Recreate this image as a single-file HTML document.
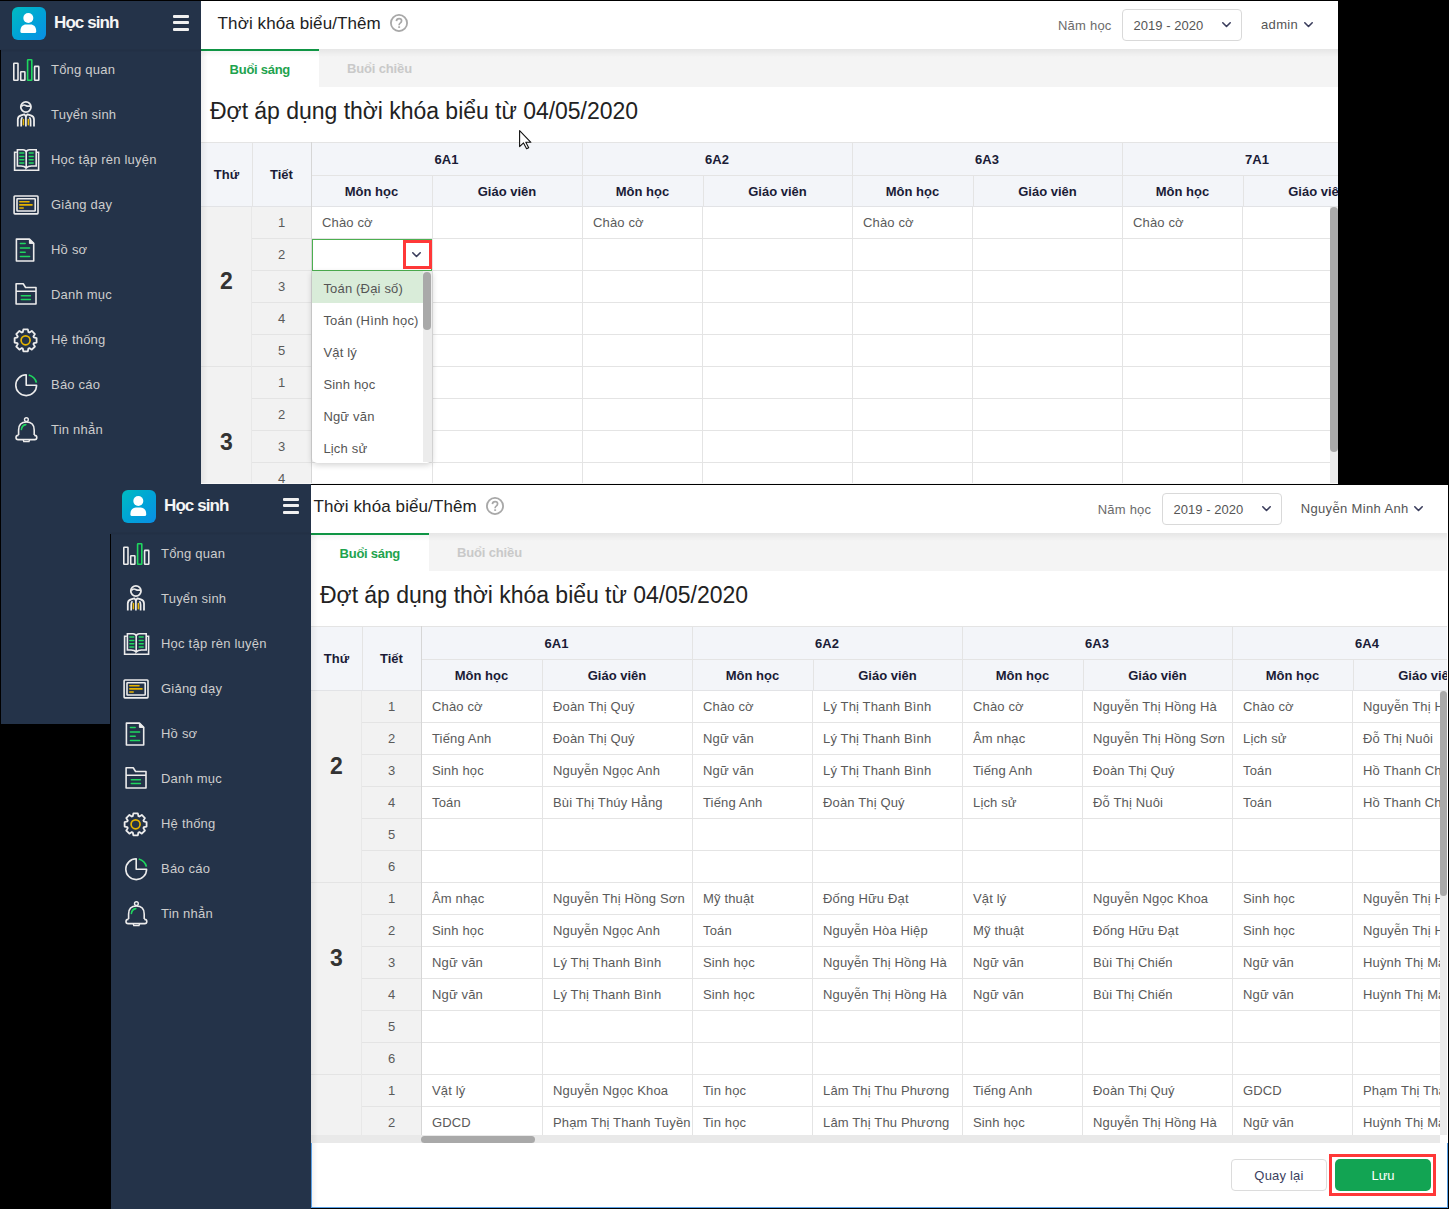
<!DOCTYPE html>
<html><head><meta charset="utf-8"><style>
html,body{margin:0;padding:0;background:#000;width:1449px;height:1209px;overflow:hidden;position:relative;font-family:"Liberation Sans", sans-serif}
div{position:absolute;box-sizing:border-box}
.t{white-space:nowrap;line-height:1}
</style></head><body>
<div style="left:0px;top:0px;width:1338px;height:1px;background:#000"></div><div style="left:0;top:0;width:1449px;height:1209px;clip-path:inset(1px 111px 726px 201px)"><div style="left:201px;top:1px;width:1137px;height:48px;background:#fff"></div><div class="t" style="left:217.6px;top:14.5px;font-size:17px;color:#222;font-weight:400;letter-spacing:0.1px;">Thời khóa biểu/Thêm</div><svg style="position:absolute;left:389.0px;top:12.899999999999999px" width="20" height="20"><circle cx="10" cy="10" r="8.1" fill="none" stroke="#a8a8a8" stroke-width="1.8"/><path d="M7.4 8.1 Q7.6 5.6 10.1 5.6 Q12.6 5.6 12.6 7.8 Q12.6 9.2 11.2 10.1 Q10.1 10.8 10.1 12.2" fill="none" stroke="#a8a8a8" stroke-width="1.7"/><rect x="9.2" y="13.3" width="1.9" height="1.6" fill="#a8a8a8"/></svg><div class="t" style="left:1058px;top:19px;font-size:13px;color:#6b6b6b;font-weight:400;letter-spacing:0.22px;">Năm học</div><div style="left:1122px;top:9px;width:120px;height:32px;background:#fff;border:1px solid #d9d9d9;border-radius:4px"></div><div class="t" style="left:1133.5px;top:19px;font-size:13px;color:#555;font-weight:400;letter-spacing:0.03px;">2019 - 2020</div><svg style="position:absolute;left:1222px;top:21.5px;overflow:visible" width="9" height="5"><path d="M0.8 0.8 L4.5 4.5 L8.2 0.8" fill="none" stroke="#3a3d5c" stroke-width="1.6" stroke-linecap="round" stroke-linejoin="round"/></svg><div class="t" style="left:1261px;top:18px;font-size:13px;color:#555;font-weight:400;letter-spacing:0.35px;">admin</div><svg style="position:absolute;left:1304.4px;top:21.5px;overflow:visible" width="9" height="5"><path d="M0.8 0.8 L4.5 4.5 L8.2 0.8" fill="none" stroke="#3a3d5c" stroke-width="1.6" stroke-linecap="round" stroke-linejoin="round"/></svg><div style="left:201px;top:49px;width:1137px;height:38px;background:#f4f4f4"></div><div style="left:201px;top:49px;width:118px;height:38px;background:#fff"></div><div style="left:201px;top:49px;width:118px;height:2px;background:#109d48"></div><div style="left:201px;top:49px;width:1137px;height:8px;background:linear-gradient(rgba(0,0,0,0.06),rgba(0,0,0,0))"></div><div class="t" style="left:229.6px;top:63px;font-size:13px;color:#1ea34e;font-weight:700;letter-spacing:-0.27px;">Buổi sáng</div><div class="t" style="left:347px;top:62px;font-size:13px;color:#c9c9c9;font-weight:700;letter-spacing:-0.15px;">Buổi chiều</div><div style="left:201px;top:87px;width:1137px;height:55px;background:#fff"></div><div class="t" style="left:210px;top:100.2px;font-size:23px;color:#222;font-weight:400;letter-spacing:-0.03px;">Đợt áp dụng thời khóa biểu từ 04/05/2020</div><div style="left:201px;top:142px;width:1137px;height:341px;background:#fff"></div><div style="left:201px;top:142px;width:1137px;height:65px;background:#f3f5f9"></div><div style="left:201px;top:207px;width:110px;height:276px;background:#f2f2f2"></div><div style="left:201px;top:142px;width:1137px;height:1px;background:#e4e4e4"></div><div style="left:311px;top:175px;width:1027px;height:1px;background:#e4e4e4"></div><div style="left:201px;top:206px;width:1137px;height:1px;background:#e2e3e6"></div><div style="left:251px;top:238px;width:1087px;height:1px;background:#e4e4e4"></div><div style="left:251px;top:270px;width:1087px;height:1px;background:#e4e4e4"></div><div style="left:251px;top:302px;width:1087px;height:1px;background:#e4e4e4"></div><div style="left:251px;top:334px;width:1087px;height:1px;background:#e4e4e4"></div><div style="left:201px;top:366px;width:1137px;height:1px;background:#e4e4e4"></div><div style="left:251px;top:398px;width:1087px;height:1px;background:#e4e4e4"></div><div style="left:251px;top:430px;width:1087px;height:1px;background:#e4e4e4"></div><div style="left:251px;top:462px;width:1087px;height:1px;background:#e4e4e4"></div><div style="left:252px;top:142px;width:1px;height:64px;background:#e4e4e4"></div><div style="left:251px;top:207px;width:1px;height:276px;background:#e8e8e8"></div><div style="left:311px;top:142px;width:1px;height:341px;background:#d6d6d6"></div><div style="left:582px;top:142px;width:1px;height:341px;background:#e4e4e4"></div><div style="left:852px;top:142px;width:1px;height:341px;background:#e4e4e4"></div><div style="left:1122px;top:142px;width:1px;height:341px;background:#e4e4e4"></div><div style="left:1392px;top:142px;width:1px;height:341px;background:#e4e4e4"></div><div style="left:432px;top:175px;width:1px;height:31px;background:#e4e4e4"></div><div style="left:703px;top:175px;width:1px;height:31px;background:#e4e4e4"></div><div style="left:973px;top:175px;width:1px;height:31px;background:#e4e4e4"></div><div style="left:1243px;top:175px;width:1px;height:31px;background:#e4e4e4"></div><div style="left:1513px;top:175px;width:1px;height:31px;background:#e4e4e4"></div><div style="left:432px;top:207px;width:1px;height:276px;background:#e4e4e4"></div><div style="left:702px;top:207px;width:1px;height:276px;background:#e4e4e4"></div><div style="left:972px;top:207px;width:1px;height:276px;background:#e4e4e4"></div><div style="left:1242px;top:207px;width:1px;height:276px;background:#e4e4e4"></div><div style="left:1512px;top:207px;width:1px;height:276px;background:#e4e4e4"></div><div class="t" style="left:196.5px;top:168px;width:60px;text-align:center;font-size:13px;color:#1a1b36;font-weight:700;letter-spacing:0px;">Thứ</div><div class="t" style="left:251.5px;top:168px;width:60px;text-align:center;font-size:13px;color:#1a1b36;font-weight:700;letter-spacing:0px;">Tiết</div><div class="t" style="left:396.5px;top:153px;width:100px;text-align:center;font-size:13px;color:#1a1b36;font-weight:700;letter-spacing:0px;">6A1</div><div class="t" style="left:321.5px;top:185px;width:100px;text-align:center;font-size:13px;color:#1a1b36;font-weight:700;letter-spacing:0px;">Môn học</div><div class="t" style="left:457.0px;top:185px;width:100px;text-align:center;font-size:13px;color:#1a1b36;font-weight:700;letter-spacing:0px;">Giáo viên</div><div class="t" style="left:667.0px;top:153px;width:100px;text-align:center;font-size:13px;color:#1a1b36;font-weight:700;letter-spacing:0px;">6A2</div><div class="t" style="left:592.5px;top:185px;width:100px;text-align:center;font-size:13px;color:#1a1b36;font-weight:700;letter-spacing:0px;">Môn học</div><div class="t" style="left:727.5px;top:185px;width:100px;text-align:center;font-size:13px;color:#1a1b36;font-weight:700;letter-spacing:0px;">Giáo viên</div><div class="t" style="left:937.0px;top:153px;width:100px;text-align:center;font-size:13px;color:#1a1b36;font-weight:700;letter-spacing:0px;">6A3</div><div class="t" style="left:862.5px;top:185px;width:100px;text-align:center;font-size:13px;color:#1a1b36;font-weight:700;letter-spacing:0px;">Môn học</div><div class="t" style="left:997.5px;top:185px;width:100px;text-align:center;font-size:13px;color:#1a1b36;font-weight:700;letter-spacing:0px;">Giáo viên</div><div class="t" style="left:1207.0px;top:153px;width:100px;text-align:center;font-size:13px;color:#1a1b36;font-weight:700;letter-spacing:0px;">7A1</div><div class="t" style="left:1132.5px;top:185px;width:100px;text-align:center;font-size:13px;color:#1a1b36;font-weight:700;letter-spacing:0px;">Môn học</div><div class="t" style="left:1267.5px;top:185px;width:100px;text-align:center;font-size:13px;color:#1a1b36;font-weight:700;letter-spacing:0px;">Giáo viên</div><div class="t" style="left:1477.0px;top:153px;width:100px;text-align:center;font-size:13px;color:#1a1b36;font-weight:700;letter-spacing:0px;">7A2</div><div class="t" style="left:1402.5px;top:185px;width:100px;text-align:center;font-size:13px;color:#1a1b36;font-weight:700;letter-spacing:0px;">Môn học</div><div class="t" style="left:1537.5px;top:185px;width:100px;text-align:center;font-size:13px;color:#1a1b36;font-weight:700;letter-spacing:0px;">Giáo viên</div><div class="t" style="left:206.5px;top:270.3px;width:40px;text-align:center;font-size:23px;color:#333;font-weight:700;letter-spacing:0px;">2</div><div class="t" style="left:206.5px;top:430.8px;width:40px;text-align:center;font-size:23px;color:#333;font-weight:700;letter-spacing:0px;">3</div><div class="t" style="left:266.5px;top:216px;width:30px;text-align:center;font-size:13px;color:#5a5a5a;font-weight:400;letter-spacing:0px;">1</div><div class="t" style="left:322px;top:216px;font-size:13px;color:#5a5a5a;font-weight:400;letter-spacing:0.15px;">Chào cờ</div><div class="t" style="left:593px;top:216px;font-size:13px;color:#5a5a5a;font-weight:400;letter-spacing:0.15px;">Chào cờ</div><div class="t" style="left:863px;top:216px;font-size:13px;color:#5a5a5a;font-weight:400;letter-spacing:0.15px;">Chào cờ</div><div class="t" style="left:1133px;top:216px;font-size:13px;color:#5a5a5a;font-weight:400;letter-spacing:0.15px;">Chào cờ</div><div class="t" style="left:266.5px;top:248px;width:30px;text-align:center;font-size:13px;color:#5a5a5a;font-weight:400;letter-spacing:0px;">2</div><div class="t" style="left:266.5px;top:280px;width:30px;text-align:center;font-size:13px;color:#5a5a5a;font-weight:400;letter-spacing:0px;">3</div><div class="t" style="left:266.5px;top:312px;width:30px;text-align:center;font-size:13px;color:#5a5a5a;font-weight:400;letter-spacing:0px;">4</div><div class="t" style="left:266.5px;top:344px;width:30px;text-align:center;font-size:13px;color:#5a5a5a;font-weight:400;letter-spacing:0px;">5</div><div class="t" style="left:266.5px;top:376px;width:30px;text-align:center;font-size:13px;color:#5a5a5a;font-weight:400;letter-spacing:0px;">1</div><div class="t" style="left:266.5px;top:408px;width:30px;text-align:center;font-size:13px;color:#5a5a5a;font-weight:400;letter-spacing:0px;">2</div><div class="t" style="left:266.5px;top:440px;width:30px;text-align:center;font-size:13px;color:#5a5a5a;font-weight:400;letter-spacing:0px;">3</div><div class="t" style="left:266.5px;top:472px;width:30px;text-align:center;font-size:13px;color:#5a5a5a;font-weight:400;letter-spacing:0px;">4</div><div style="left:1330px;top:207px;width:8px;height:276px;background:#ebebeb"></div><div style="left:1330px;top:207px;width:8px;height:245px;background:#a9a9a9;border-radius:4px"></div><div style="left:312px;top:239px;width:120px;height:32px;background:#fff;border:1px solid #4caf50"></div><svg style="position:absolute;left:412px;top:251.8px;overflow:visible" width="9" height="5"><path d="M0.8 0.8 L4.5 4.5 L8.2 0.8" fill="none" stroke="#3a3d5c" stroke-width="1.6" stroke-linecap="round" stroke-linejoin="round"/></svg><div style="left:403px;top:240px;width:29px;height:29px;border:3px solid #ff3838"></div><div style="left:312px;top:271px;width:120px;height:192px;background:#fff;border-radius:0 0 5px 5px;box-shadow:0 2px 6px rgba(0,0,0,0.18)"></div><div style="left:312px;top:271px;width:111px;height:32px;background:#d9ecd9"></div><div style="left:423px;top:271px;width:9px;height:191px;background:#ececec"></div><div style="left:423px;top:272px;width:8px;height:58px;background:#a9a9a9;border-radius:4px"></div><div class="t" style="left:323.4px;top:282px;font-size:13px;color:#555;font-weight:400;letter-spacing:0.18px;">Toán (Đại số)</div><div class="t" style="left:323.4px;top:314px;font-size:13px;color:#555;font-weight:400;letter-spacing:0.18px;">Toán (Hình học)</div><div class="t" style="left:323.4px;top:346px;font-size:13px;color:#555;font-weight:400;letter-spacing:0.18px;">Vật lý</div><div class="t" style="left:323.4px;top:378px;font-size:13px;color:#555;font-weight:400;letter-spacing:0.18px;">Sinh học</div><div class="t" style="left:323.4px;top:410px;font-size:13px;color:#555;font-weight:400;letter-spacing:0.18px;">Ngữ văn</div><div class="t" style="left:323.4px;top:442px;font-size:13px;color:#555;font-weight:400;letter-spacing:0.18px;">Lịch sử</div><svg style="position:absolute;left:0;top:0;overflow:visible" width="1" height="1"><path d="M519.6 130.6 V146.6 L523.5 142.9 L526.6 148.7 L528.7 147.7 L525.8 142.3 H530.9 Z" fill="#fff" stroke="#111" stroke-width="1.1" stroke-linejoin="round"/></svg><div style="left:201px;top:49px;width:7px;height:434px;background:linear-gradient(to right, rgba(0,0,0,0.06), rgba(0,0,0,0))"></div></div><div style="left:201px;top:483px;width:1137px;height:1px;background:#f8f8f8"></div><div style="left:0px;top:1px;width:201px;height:723px;background:#243349"></div><div style="left:0px;top:49px;width:201px;height:3px;background:linear-gradient(rgba(0,0,0,0.03),rgba(0,0,0,0.06),rgba(0,0,0,0.02))"></div><div style="left:0px;top:50px;width:1px;height:674px;background:#000"></div><div style="left:12px;top:7px;width:34px;height:33px;border-radius:6px;background:linear-gradient(135deg,#00bcc0 0%,#00a4d6 50%,#0a8ee6 100%)"></div><svg style="position:absolute;left:12px;top:7px" width="34" height="33"><circle cx="16.3" cy="11" r="5" fill="#fff"/><path d="M8.4 24 C8.4 19.5 11 17.4 14 17.4 H18.6 C21.6 17.4 24.2 19.5 24.2 24 V24.6 Q24.2 26.1 22.7 26.1 H9.9 Q8.4 26.1 8.4 24.6 Z" fill="#fff"/></svg><div class="t" style="left:54px;top:14.2px;font-size:17px;color:#f5f5f5;font-weight:700;letter-spacing:-0.9px;">Học sinh</div><div style="left:173px;top:15px;width:16px;height:3px;background:#f0f0f0;border-radius:1px"></div><div style="left:173px;top:21.4px;width:16px;height:3px;background:#f0f0f0;border-radius:1px"></div><div style="left:173px;top:27.8px;width:16px;height:3px;background:#f0f0f0;border-radius:1px"></div><div class="t" style="left:51px;top:63px;font-size:13px;color:#cdcdcd;font-weight:400;letter-spacing:0.22px;">Tổng quan</div><div class="t" style="left:51px;top:108px;font-size:13px;color:#cdcdcd;font-weight:400;letter-spacing:0.22px;">Tuyển sinh</div><div class="t" style="left:51px;top:153px;font-size:13px;color:#cdcdcd;font-weight:400;letter-spacing:0.22px;">Học tập rèn luyện</div><div class="t" style="left:51px;top:198px;font-size:13px;color:#cdcdcd;font-weight:400;letter-spacing:0.22px;">Giảng dạy</div><div class="t" style="left:51px;top:243px;font-size:13px;color:#cdcdcd;font-weight:400;letter-spacing:0.22px;">Hồ sơ</div><div class="t" style="left:51px;top:288px;font-size:13px;color:#cdcdcd;font-weight:400;letter-spacing:0.22px;">Danh mục</div><div class="t" style="left:51px;top:333px;font-size:13px;color:#cdcdcd;font-weight:400;letter-spacing:0.22px;">Hệ thống</div><div class="t" style="left:51px;top:378px;font-size:13px;color:#cdcdcd;font-weight:400;letter-spacing:0.22px;">Báo cáo</div><div class="t" style="left:51px;top:423px;font-size:13px;color:#cdcdcd;font-weight:400;letter-spacing:0.22px;">Tin nhẳn</div><svg style="position:absolute;left:0px;top:0px;overflow:visible" width="50" height="460" viewBox="0 0 50 460"><rect x="13.8" y="63.3" width="4.2" height="17" fill="none" stroke="#ececec" stroke-width="1.6" rx="0.5"/><rect x="20.7" y="71.8" width="4.2" height="8.5" fill="none" stroke="#ececec" stroke-width="1.6" rx="0.5"/><rect x="27.6" y="59.8" width="4.2" height="20.5" fill="none" stroke="#1fd65f" stroke-width="1.6" rx="0.5"/><rect x="34.6" y="66.4" width="4.2" height="13.9" fill="none" stroke="#ececec" stroke-width="1.6" rx="0.5"/><circle cx="25.9" cy="107" r="5.1" fill="none" stroke="#ececec" stroke-width="1.8"/><path d="M21.4 106.6 Q23.2 104.2 25.6 105.4 Q28 106.7 30.6 105.9" fill="none" stroke="#ececec" stroke-width="1.7"/><path d="M17.8 126.6 V119.6 Q17.8 116.4 21 115.4 L24.4 114.3 L25.9 116.4 L27.4 114.3 L30.8 115.4 Q34 116.4 34 119.6 V126.6" fill="none" stroke="#ececec" stroke-width="1.8" stroke-linejoin="round"/><path d="M21.2 126.6 V120.8 Q21.2 118.6 22.4 117.2 M25.9 116.6 V126.6 M30.6 126.6 V120.8 Q30.6 118.6 29.4 117.2" fill="none" stroke="#ececec" stroke-width="1.7"/><path d="M23.4 119.4 V124.8 M28.4 119.4 V124.8" fill="none" stroke="#e6b400" stroke-width="1.5" stroke-linecap="round"/><path d="M16.8 152.3 H14.6 V170.2 H38.6 V152.3 H36.6" fill="none" stroke="#ececec" stroke-width="1.6"/><path d="M26.2 168 Q24.5 166 21 166 H17.4 V149.8 H23 Q25.6 149.8 26.2 152 Q26.8 149.8 29.4 149.8 H36.2 V166 H31.4 Q27.9 166 26.2 168 V152" fill="none" stroke="#ececec" stroke-width="1.6"/><path d="M19.8 153.1 H23.8 M29.2 153.1 H33.2" stroke="#1fd65f" stroke-width="1.5" stroke-linecap="round"/><path d="M19.8 156.4 H23.8 M29.2 156.4 H33.2" stroke="#1fd65f" stroke-width="1.5" stroke-linecap="round"/><path d="M19.8 159.8 H23.8 M29.2 159.8 H33.2" stroke="#1fd65f" stroke-width="1.5" stroke-linecap="round"/><path d="M19.8 163.1 H23.8 M29.2 163.1 H33.2" stroke="#1fd65f" stroke-width="1.5" stroke-linecap="round"/><rect x="14.1" y="196" width="23.9" height="17.9" fill="none" stroke="#ececec" stroke-width="1.6" rx="0.8"/><rect x="17" y="198.8" width="18.2" height="12.2" fill="none" stroke="#ececec" stroke-width="1.6" rx="0.5"/><path d="M19.8 201.8 H29 M19.8 204.9 H32 M19.8 208 H23.2" stroke="#e6b400" stroke-width="1.6" stroke-linecap="round"/><path d="M16.4 239.1 H29.4 L33.7 243.4 V261 H16.4 Z" fill="none" stroke="#ececec" stroke-width="1.6" stroke-linejoin="round"/><path d="M29.4 239.1 V243.4 H33.7 Z" fill="#ececec" stroke="#ececec" stroke-width="1"/><path d="M20.4 243.6 H25.2 M20.4 247.9 H29.6 M20.4 252.2 H25.2 M20.4 256.5 H29.6" stroke="#1fd65f" stroke-width="1.5" stroke-linecap="round"/><path d="M16.1 304 V283.8 H23.2 L25.6 287.5 H36 V304 Z M16.1 291.2 H36" fill="none" stroke="#ececec" stroke-width="1.6" stroke-linejoin="round"/><path d="M21.3 295.8 H30.4 M21.3 299.5 H30.4" stroke="#1fd65f" stroke-width="1.5" stroke-linecap="round"/><path d="M28.42 348.53 L27.83 351.28 L23.37 351.28 L22.78 348.53 L21.77 348.11 L19.41 349.64 L16.26 346.49 L17.79 344.13 L17.37 343.12 L14.62 342.53 L14.62 338.07 L17.37 337.48 L17.79 336.47 L16.26 334.11 L19.41 330.96 L21.77 332.49 L22.78 332.07 L23.37 329.32 L27.83 329.32 L28.42 332.07 L29.43 332.49 L31.79 330.96 L34.94 334.11 L33.41 336.47 L33.83 337.48 L36.58 338.07 L36.58 342.53 L33.83 343.12 L33.41 344.13 L34.94 346.49 L31.79 349.64 L29.43 348.11 Z" fill="none" stroke="#ececec" stroke-width="1.8" stroke-linejoin="round"/><circle cx="25.6" cy="340.3" r="4.5" fill="none" stroke="#e6b400" stroke-width="1.7"/><path d="M26.2 374.8 A10.4 10.4 0 1 0 36.6 385.2 H26.2 Z" fill="none" stroke="#ececec" stroke-width="1.6" stroke-linejoin="round"/><path d="M28.74 375.01 A10.5 10.5 0 0 1 36.39 382.66" fill="none" stroke="#1fd65f" stroke-width="1.7"/><circle cx="26.4" cy="419.6" r="1.9" fill="none" stroke="#ececec" stroke-width="1.4"/><path d="M18.6 435 V430 Q18.6 422 26.4 422 Q34.2 422 34.2 430 V435" fill="none" stroke="#ececec" stroke-width="1.6"/><path d="M18.6 435.4 H18.1 A2.1 2.1 0 0 0 18.1 439.6 H34.7 A2.1 2.1 0 0 0 34.7 435.4 H34.2" fill="none" stroke="#ececec" stroke-width="1.6"/><path d="M23.2 439.5 L23.8 441.6 H29 L29.6 439.5" fill="none" stroke="#ececec" stroke-width="1.4"/><path d="M21.4 429.5 Q22 425 25.8 424.6" fill="none" stroke="#1fd65f" stroke-width="1.6" stroke-linecap="round"/></svg><div style="left:311px;top:484px;width:1137px;height:1px;background:#000"></div><div style="left:0;top:0;width:1449px;height:1209px;clip-path:inset(485px 1px 2px 311px)"><div style="left:311px;top:485px;width:1137px;height:723px;background:#fff"></div><div style="left:311px;top:485px;width:1137px;height:48px;background:#fff"></div><div class="t" style="left:313.5px;top:497.5px;font-size:17px;color:#222;font-weight:400;letter-spacing:0.1px;">Thời khóa biểu/Thêm</div><svg style="position:absolute;left:484.9px;top:495.9px" width="20" height="20"><circle cx="10" cy="10" r="8.1" fill="none" stroke="#a8a8a8" stroke-width="1.8"/><path d="M7.4 8.1 Q7.6 5.6 10.1 5.6 Q12.6 5.6 12.6 7.8 Q12.6 9.2 11.2 10.1 Q10.1 10.8 10.1 12.2" fill="none" stroke="#a8a8a8" stroke-width="1.7"/><rect x="9.2" y="13.3" width="1.9" height="1.6" fill="#a8a8a8"/></svg><div class="t" style="left:1097.7px;top:503px;font-size:13px;color:#6b6b6b;font-weight:400;letter-spacing:0.22px;">Năm học</div><div style="left:1162px;top:493px;width:120px;height:32px;background:#fff;border:1px solid #d9d9d9;border-radius:4px"></div><div class="t" style="left:1173.5px;top:503px;font-size:13px;color:#555;font-weight:400;letter-spacing:0.03px;">2019 - 2020</div><svg style="position:absolute;left:1262px;top:505.5px;overflow:visible" width="9" height="5"><path d="M0.8 0.8 L4.5 4.5 L8.2 0.8" fill="none" stroke="#3a3d5c" stroke-width="1.6" stroke-linecap="round" stroke-linejoin="round"/></svg><div class="t" style="left:1300.7px;top:502px;font-size:13px;color:#555;font-weight:400;letter-spacing:0.35px;">Nguyễn Minh Anh</div><svg style="position:absolute;left:1414.0px;top:505.5px;overflow:visible" width="9" height="5"><path d="M0.8 0.8 L4.5 4.5 L8.2 0.8" fill="none" stroke="#3a3d5c" stroke-width="1.6" stroke-linecap="round" stroke-linejoin="round"/></svg><div style="left:311px;top:533px;width:1137px;height:38px;background:#f4f4f4"></div><div style="left:311px;top:533px;width:118px;height:38px;background:#fff"></div><div style="left:311px;top:533px;width:118px;height:2px;background:#109d48"></div><div style="left:311px;top:533px;width:1137px;height:8px;background:linear-gradient(rgba(0,0,0,0.06),rgba(0,0,0,0))"></div><div class="t" style="left:339.6px;top:547px;font-size:13px;color:#1ea34e;font-weight:700;letter-spacing:-0.27px;">Buổi sáng</div><div class="t" style="left:457px;top:546px;font-size:13px;color:#c9c9c9;font-weight:700;letter-spacing:-0.15px;">Buổi chiều</div><div style="left:311px;top:571px;width:1137px;height:55px;background:#fff"></div><div class="t" style="left:320px;top:584.2px;font-size:23px;color:#222;font-weight:400;letter-spacing:-0.03px;">Đợt áp dụng thời khóa biểu từ 04/05/2020</div><div style="left:311px;top:626px;width:1137px;height:509px;background:#fff"></div><div style="left:311px;top:626px;width:1137px;height:65px;background:#f3f5f9"></div><div style="left:311px;top:691px;width:110px;height:444px;background:#f2f2f2"></div><div style="left:311px;top:626px;width:1137px;height:1px;background:#e4e4e4"></div><div style="left:421px;top:659px;width:1027px;height:1px;background:#e4e4e4"></div><div style="left:311px;top:690px;width:1137px;height:1px;background:#e2e3e6"></div><div style="left:361px;top:722px;width:1087px;height:1px;background:#e4e4e4"></div><div style="left:361px;top:754px;width:1087px;height:1px;background:#e4e4e4"></div><div style="left:361px;top:786px;width:1087px;height:1px;background:#e4e4e4"></div><div style="left:361px;top:818px;width:1087px;height:1px;background:#e4e4e4"></div><div style="left:361px;top:850px;width:1087px;height:1px;background:#e4e4e4"></div><div style="left:311px;top:882px;width:1137px;height:1px;background:#e4e4e4"></div><div style="left:361px;top:914px;width:1087px;height:1px;background:#e4e4e4"></div><div style="left:361px;top:946px;width:1087px;height:1px;background:#e4e4e4"></div><div style="left:361px;top:978px;width:1087px;height:1px;background:#e4e4e4"></div><div style="left:361px;top:1010px;width:1087px;height:1px;background:#e4e4e4"></div><div style="left:361px;top:1042px;width:1087px;height:1px;background:#e4e4e4"></div><div style="left:311px;top:1074px;width:1137px;height:1px;background:#e4e4e4"></div><div style="left:361px;top:1106px;width:1087px;height:1px;background:#e4e4e4"></div><div style="left:362px;top:626px;width:1px;height:64px;background:#e4e4e4"></div><div style="left:361px;top:691px;width:1px;height:444px;background:#e8e8e8"></div><div style="left:421px;top:626px;width:1px;height:509px;background:#d6d6d6"></div><div style="left:692px;top:626px;width:1px;height:509px;background:#e4e4e4"></div><div style="left:962px;top:626px;width:1px;height:509px;background:#e4e4e4"></div><div style="left:1232px;top:626px;width:1px;height:509px;background:#e4e4e4"></div><div style="left:1502px;top:626px;width:1px;height:509px;background:#e4e4e4"></div><div style="left:542px;top:659px;width:1px;height:31px;background:#e4e4e4"></div><div style="left:813px;top:659px;width:1px;height:31px;background:#e4e4e4"></div><div style="left:1083px;top:659px;width:1px;height:31px;background:#e4e4e4"></div><div style="left:1353px;top:659px;width:1px;height:31px;background:#e4e4e4"></div><div style="left:1623px;top:659px;width:1px;height:31px;background:#e4e4e4"></div><div style="left:542px;top:691px;width:1px;height:444px;background:#e4e4e4"></div><div style="left:812px;top:691px;width:1px;height:444px;background:#e4e4e4"></div><div style="left:1082px;top:691px;width:1px;height:444px;background:#e4e4e4"></div><div style="left:1352px;top:691px;width:1px;height:444px;background:#e4e4e4"></div><div style="left:1622px;top:691px;width:1px;height:444px;background:#e4e4e4"></div><div class="t" style="left:306.5px;top:652px;width:60px;text-align:center;font-size:13px;color:#1a1b36;font-weight:700;letter-spacing:0px;">Thứ</div><div class="t" style="left:361.5px;top:652px;width:60px;text-align:center;font-size:13px;color:#1a1b36;font-weight:700;letter-spacing:0px;">Tiết</div><div class="t" style="left:506.5px;top:637px;width:100px;text-align:center;font-size:13px;color:#1a1b36;font-weight:700;letter-spacing:0px;">6A1</div><div class="t" style="left:431.5px;top:669px;width:100px;text-align:center;font-size:13px;color:#1a1b36;font-weight:700;letter-spacing:0px;">Môn học</div><div class="t" style="left:567.0px;top:669px;width:100px;text-align:center;font-size:13px;color:#1a1b36;font-weight:700;letter-spacing:0px;">Giáo viên</div><div class="t" style="left:777.0px;top:637px;width:100px;text-align:center;font-size:13px;color:#1a1b36;font-weight:700;letter-spacing:0px;">6A2</div><div class="t" style="left:702.5px;top:669px;width:100px;text-align:center;font-size:13px;color:#1a1b36;font-weight:700;letter-spacing:0px;">Môn học</div><div class="t" style="left:837.5px;top:669px;width:100px;text-align:center;font-size:13px;color:#1a1b36;font-weight:700;letter-spacing:0px;">Giáo viên</div><div class="t" style="left:1047.0px;top:637px;width:100px;text-align:center;font-size:13px;color:#1a1b36;font-weight:700;letter-spacing:0px;">6A3</div><div class="t" style="left:972.5px;top:669px;width:100px;text-align:center;font-size:13px;color:#1a1b36;font-weight:700;letter-spacing:0px;">Môn học</div><div class="t" style="left:1107.5px;top:669px;width:100px;text-align:center;font-size:13px;color:#1a1b36;font-weight:700;letter-spacing:0px;">Giáo viên</div><div class="t" style="left:1317.0px;top:637px;width:100px;text-align:center;font-size:13px;color:#1a1b36;font-weight:700;letter-spacing:0px;">6A4</div><div class="t" style="left:1242.5px;top:669px;width:100px;text-align:center;font-size:13px;color:#1a1b36;font-weight:700;letter-spacing:0px;">Môn học</div><div class="t" style="left:1377.5px;top:669px;width:100px;text-align:center;font-size:13px;color:#1a1b36;font-weight:700;letter-spacing:0px;">Giáo viên</div><div class="t" style="left:1587.0px;top:637px;width:100px;text-align:center;font-size:13px;color:#1a1b36;font-weight:700;letter-spacing:0px;">6A5</div><div class="t" style="left:1512.5px;top:669px;width:100px;text-align:center;font-size:13px;color:#1a1b36;font-weight:700;letter-spacing:0px;">Môn học</div><div class="t" style="left:1647.5px;top:669px;width:100px;text-align:center;font-size:13px;color:#1a1b36;font-weight:700;letter-spacing:0px;">Giáo viên</div><div class="t" style="left:316.5px;top:755.3px;width:40px;text-align:center;font-size:23px;color:#333;font-weight:700;letter-spacing:0px;">2</div><div class="t" style="left:316.5px;top:947.3px;width:40px;text-align:center;font-size:23px;color:#333;font-weight:700;letter-spacing:0px;">3</div><div class="t" style="left:376.5px;top:700px;width:30px;text-align:center;font-size:13px;color:#5a5a5a;font-weight:400;letter-spacing:0px;">1</div><div class="t" style="left:432px;top:700px;font-size:13px;color:#5a5a5a;font-weight:400;letter-spacing:0.15px;">Chào cờ</div><div class="t" style="left:553px;top:700px;font-size:13px;color:#5a5a5a;font-weight:400;letter-spacing:0.15px;">Đoàn Thị Quý</div><div class="t" style="left:703px;top:700px;font-size:13px;color:#5a5a5a;font-weight:400;letter-spacing:0.15px;">Chào cờ</div><div class="t" style="left:823px;top:700px;font-size:13px;color:#5a5a5a;font-weight:400;letter-spacing:0.15px;">Lý Thị Thanh Bình</div><div class="t" style="left:973px;top:700px;font-size:13px;color:#5a5a5a;font-weight:400;letter-spacing:0.15px;">Chào cờ</div><div class="t" style="left:1093px;top:700px;font-size:13px;color:#5a5a5a;font-weight:400;letter-spacing:0.15px;">Nguyễn Thị Hồng Hà</div><div class="t" style="left:1243px;top:700px;font-size:13px;color:#5a5a5a;font-weight:400;letter-spacing:0.15px;">Chào cờ</div><div class="t" style="left:1363px;top:700px;font-size:13px;color:#5a5a5a;font-weight:400;letter-spacing:0.15px;">Nguyễn Thị Hồng Hà</div><div class="t" style="left:376.5px;top:732px;width:30px;text-align:center;font-size:13px;color:#5a5a5a;font-weight:400;letter-spacing:0px;">2</div><div class="t" style="left:432px;top:732px;font-size:13px;color:#5a5a5a;font-weight:400;letter-spacing:0.15px;">Tiếng Anh</div><div class="t" style="left:553px;top:732px;font-size:13px;color:#5a5a5a;font-weight:400;letter-spacing:0.15px;">Đoàn Thị Quý</div><div class="t" style="left:703px;top:732px;font-size:13px;color:#5a5a5a;font-weight:400;letter-spacing:0.15px;">Ngữ văn</div><div class="t" style="left:823px;top:732px;font-size:13px;color:#5a5a5a;font-weight:400;letter-spacing:0.15px;">Lý Thị Thanh Bình</div><div class="t" style="left:973px;top:732px;font-size:13px;color:#5a5a5a;font-weight:400;letter-spacing:0.15px;">Âm nhạc</div><div class="t" style="left:1093px;top:732px;font-size:13px;color:#5a5a5a;font-weight:400;letter-spacing:0.15px;">Nguyễn Thị Hồng Sơn</div><div class="t" style="left:1243px;top:732px;font-size:13px;color:#5a5a5a;font-weight:400;letter-spacing:0.15px;">Lịch sử</div><div class="t" style="left:1363px;top:732px;font-size:13px;color:#5a5a5a;font-weight:400;letter-spacing:0.15px;">Đỗ Thị Nuôi</div><div class="t" style="left:376.5px;top:764px;width:30px;text-align:center;font-size:13px;color:#5a5a5a;font-weight:400;letter-spacing:0px;">3</div><div class="t" style="left:432px;top:764px;font-size:13px;color:#5a5a5a;font-weight:400;letter-spacing:0.15px;">Sinh học</div><div class="t" style="left:553px;top:764px;font-size:13px;color:#5a5a5a;font-weight:400;letter-spacing:0.15px;">Nguyễn Ngọc Anh</div><div class="t" style="left:703px;top:764px;font-size:13px;color:#5a5a5a;font-weight:400;letter-spacing:0.15px;">Ngữ văn</div><div class="t" style="left:823px;top:764px;font-size:13px;color:#5a5a5a;font-weight:400;letter-spacing:0.15px;">Lý Thị Thanh Bình</div><div class="t" style="left:973px;top:764px;font-size:13px;color:#5a5a5a;font-weight:400;letter-spacing:0.15px;">Tiếng Anh</div><div class="t" style="left:1093px;top:764px;font-size:13px;color:#5a5a5a;font-weight:400;letter-spacing:0.15px;">Đoàn Thị Quý</div><div class="t" style="left:1243px;top:764px;font-size:13px;color:#5a5a5a;font-weight:400;letter-spacing:0.15px;">Toán</div><div class="t" style="left:1363px;top:764px;font-size:13px;color:#5a5a5a;font-weight:400;letter-spacing:0.15px;">Hồ Thanh Chung</div><div class="t" style="left:376.5px;top:796px;width:30px;text-align:center;font-size:13px;color:#5a5a5a;font-weight:400;letter-spacing:0px;">4</div><div class="t" style="left:432px;top:796px;font-size:13px;color:#5a5a5a;font-weight:400;letter-spacing:0.15px;">Toán</div><div class="t" style="left:553px;top:796px;font-size:13px;color:#5a5a5a;font-weight:400;letter-spacing:0.15px;">Bùi Thị Thúy Hẳng</div><div class="t" style="left:703px;top:796px;font-size:13px;color:#5a5a5a;font-weight:400;letter-spacing:0.15px;">Tiếng Anh</div><div class="t" style="left:823px;top:796px;font-size:13px;color:#5a5a5a;font-weight:400;letter-spacing:0.15px;">Đoàn Thị Quý</div><div class="t" style="left:973px;top:796px;font-size:13px;color:#5a5a5a;font-weight:400;letter-spacing:0.15px;">Lịch sử</div><div class="t" style="left:1093px;top:796px;font-size:13px;color:#5a5a5a;font-weight:400;letter-spacing:0.15px;">Đỗ Thị Nuôi</div><div class="t" style="left:1243px;top:796px;font-size:13px;color:#5a5a5a;font-weight:400;letter-spacing:0.15px;">Toán</div><div class="t" style="left:1363px;top:796px;font-size:13px;color:#5a5a5a;font-weight:400;letter-spacing:0.15px;">Hồ Thanh Chung</div><div class="t" style="left:376.5px;top:828px;width:30px;text-align:center;font-size:13px;color:#5a5a5a;font-weight:400;letter-spacing:0px;">5</div><div class="t" style="left:376.5px;top:860px;width:30px;text-align:center;font-size:13px;color:#5a5a5a;font-weight:400;letter-spacing:0px;">6</div><div class="t" style="left:376.5px;top:892px;width:30px;text-align:center;font-size:13px;color:#5a5a5a;font-weight:400;letter-spacing:0px;">1</div><div class="t" style="left:432px;top:892px;font-size:13px;color:#5a5a5a;font-weight:400;letter-spacing:0.15px;">Âm nhạc</div><div class="t" style="left:553px;top:892px;font-size:13px;color:#5a5a5a;font-weight:400;letter-spacing:0.15px;">Nguyễn Thị Hồng Sơn</div><div class="t" style="left:703px;top:892px;font-size:13px;color:#5a5a5a;font-weight:400;letter-spacing:0.15px;">Mỹ thuật</div><div class="t" style="left:823px;top:892px;font-size:13px;color:#5a5a5a;font-weight:400;letter-spacing:0.15px;">Đống Hữu Đạt</div><div class="t" style="left:973px;top:892px;font-size:13px;color:#5a5a5a;font-weight:400;letter-spacing:0.15px;">Vật lý</div><div class="t" style="left:1093px;top:892px;font-size:13px;color:#5a5a5a;font-weight:400;letter-spacing:0.15px;">Nguyễn Ngọc Khoa</div><div class="t" style="left:1243px;top:892px;font-size:13px;color:#5a5a5a;font-weight:400;letter-spacing:0.15px;">Sinh học</div><div class="t" style="left:1363px;top:892px;font-size:13px;color:#5a5a5a;font-weight:400;letter-spacing:0.15px;">Nguyễn Thị Hồng Hà</div><div class="t" style="left:376.5px;top:924px;width:30px;text-align:center;font-size:13px;color:#5a5a5a;font-weight:400;letter-spacing:0px;">2</div><div class="t" style="left:432px;top:924px;font-size:13px;color:#5a5a5a;font-weight:400;letter-spacing:0.15px;">Sinh học</div><div class="t" style="left:553px;top:924px;font-size:13px;color:#5a5a5a;font-weight:400;letter-spacing:0.15px;">Nguyễn Ngọc Anh</div><div class="t" style="left:703px;top:924px;font-size:13px;color:#5a5a5a;font-weight:400;letter-spacing:0.15px;">Toán</div><div class="t" style="left:823px;top:924px;font-size:13px;color:#5a5a5a;font-weight:400;letter-spacing:0.15px;">Nguyễn Hòa Hiệp</div><div class="t" style="left:973px;top:924px;font-size:13px;color:#5a5a5a;font-weight:400;letter-spacing:0.15px;">Mỹ thuật</div><div class="t" style="left:1093px;top:924px;font-size:13px;color:#5a5a5a;font-weight:400;letter-spacing:0.15px;">Đống Hữu Đạt</div><div class="t" style="left:1243px;top:924px;font-size:13px;color:#5a5a5a;font-weight:400;letter-spacing:0.15px;">Sinh học</div><div class="t" style="left:1363px;top:924px;font-size:13px;color:#5a5a5a;font-weight:400;letter-spacing:0.15px;">Nguyễn Thị Hồng Hà</div><div class="t" style="left:376.5px;top:956px;width:30px;text-align:center;font-size:13px;color:#5a5a5a;font-weight:400;letter-spacing:0px;">3</div><div class="t" style="left:432px;top:956px;font-size:13px;color:#5a5a5a;font-weight:400;letter-spacing:0.15px;">Ngữ văn</div><div class="t" style="left:553px;top:956px;font-size:13px;color:#5a5a5a;font-weight:400;letter-spacing:0.15px;">Lý Thị Thanh Bình</div><div class="t" style="left:703px;top:956px;font-size:13px;color:#5a5a5a;font-weight:400;letter-spacing:0.15px;">Sinh học</div><div class="t" style="left:823px;top:956px;font-size:13px;color:#5a5a5a;font-weight:400;letter-spacing:0.15px;">Nguyễn Thị Hồng Hà</div><div class="t" style="left:973px;top:956px;font-size:13px;color:#5a5a5a;font-weight:400;letter-spacing:0.15px;">Ngữ văn</div><div class="t" style="left:1093px;top:956px;font-size:13px;color:#5a5a5a;font-weight:400;letter-spacing:0.15px;">Bùi Thị Chiến</div><div class="t" style="left:1243px;top:956px;font-size:13px;color:#5a5a5a;font-weight:400;letter-spacing:0.15px;">Ngữ văn</div><div class="t" style="left:1363px;top:956px;font-size:13px;color:#5a5a5a;font-weight:400;letter-spacing:0.15px;">Huỳnh Thị Mai</div><div class="t" style="left:376.5px;top:988px;width:30px;text-align:center;font-size:13px;color:#5a5a5a;font-weight:400;letter-spacing:0px;">4</div><div class="t" style="left:432px;top:988px;font-size:13px;color:#5a5a5a;font-weight:400;letter-spacing:0.15px;">Ngữ văn</div><div class="t" style="left:553px;top:988px;font-size:13px;color:#5a5a5a;font-weight:400;letter-spacing:0.15px;">Lý Thị Thanh Bình</div><div class="t" style="left:703px;top:988px;font-size:13px;color:#5a5a5a;font-weight:400;letter-spacing:0.15px;">Sinh học</div><div class="t" style="left:823px;top:988px;font-size:13px;color:#5a5a5a;font-weight:400;letter-spacing:0.15px;">Nguyễn Thị Hồng Hà</div><div class="t" style="left:973px;top:988px;font-size:13px;color:#5a5a5a;font-weight:400;letter-spacing:0.15px;">Ngữ văn</div><div class="t" style="left:1093px;top:988px;font-size:13px;color:#5a5a5a;font-weight:400;letter-spacing:0.15px;">Bùi Thị Chiến</div><div class="t" style="left:1243px;top:988px;font-size:13px;color:#5a5a5a;font-weight:400;letter-spacing:0.15px;">Ngữ văn</div><div class="t" style="left:1363px;top:988px;font-size:13px;color:#5a5a5a;font-weight:400;letter-spacing:0.15px;">Huỳnh Thị Mai</div><div class="t" style="left:376.5px;top:1020px;width:30px;text-align:center;font-size:13px;color:#5a5a5a;font-weight:400;letter-spacing:0px;">5</div><div class="t" style="left:376.5px;top:1052px;width:30px;text-align:center;font-size:13px;color:#5a5a5a;font-weight:400;letter-spacing:0px;">6</div><div class="t" style="left:376.5px;top:1084px;width:30px;text-align:center;font-size:13px;color:#5a5a5a;font-weight:400;letter-spacing:0px;">1</div><div class="t" style="left:432px;top:1084px;font-size:13px;color:#5a5a5a;font-weight:400;letter-spacing:0.15px;">Vật lý</div><div class="t" style="left:553px;top:1084px;font-size:13px;color:#5a5a5a;font-weight:400;letter-spacing:0.15px;">Nguyễn Ngọc Khoa</div><div class="t" style="left:703px;top:1084px;font-size:13px;color:#5a5a5a;font-weight:400;letter-spacing:0.15px;">Tin học</div><div class="t" style="left:823px;top:1084px;font-size:13px;color:#5a5a5a;font-weight:400;letter-spacing:0.15px;">Lâm Thị Thu Phương</div><div class="t" style="left:973px;top:1084px;font-size:13px;color:#5a5a5a;font-weight:400;letter-spacing:0.15px;">Tiếng Anh</div><div class="t" style="left:1093px;top:1084px;font-size:13px;color:#5a5a5a;font-weight:400;letter-spacing:0.15px;">Đoàn Thị Quý</div><div class="t" style="left:1243px;top:1084px;font-size:13px;color:#5a5a5a;font-weight:400;letter-spacing:0.15px;">GDCD</div><div class="t" style="left:1363px;top:1084px;font-size:13px;color:#5a5a5a;font-weight:400;letter-spacing:0.15px;">Phạm Thị Thanh Tuyền</div><div class="t" style="left:376.5px;top:1116px;width:30px;text-align:center;font-size:13px;color:#5a5a5a;font-weight:400;letter-spacing:0px;">2</div><div class="t" style="left:432px;top:1116px;font-size:13px;color:#5a5a5a;font-weight:400;letter-spacing:0.15px;">GDCD</div><div class="t" style="left:553px;top:1116px;font-size:13px;color:#5a5a5a;font-weight:400;letter-spacing:0.15px;">Phạm Thị Thanh Tuyền</div><div class="t" style="left:703px;top:1116px;font-size:13px;color:#5a5a5a;font-weight:400;letter-spacing:0.15px;">Tin học</div><div class="t" style="left:823px;top:1116px;font-size:13px;color:#5a5a5a;font-weight:400;letter-spacing:0.15px;">Lâm Thị Thu Phương</div><div class="t" style="left:973px;top:1116px;font-size:13px;color:#5a5a5a;font-weight:400;letter-spacing:0.15px;">Sinh học</div><div class="t" style="left:1093px;top:1116px;font-size:13px;color:#5a5a5a;font-weight:400;letter-spacing:0.15px;">Nguyễn Thị Hồng Hà</div><div class="t" style="left:1243px;top:1116px;font-size:13px;color:#5a5a5a;font-weight:400;letter-spacing:0.15px;">Ngữ văn</div><div class="t" style="left:1363px;top:1116px;font-size:13px;color:#5a5a5a;font-weight:400;letter-spacing:0.15px;">Huỳnh Thị Mai</div><div style="left:1440px;top:691px;width:7px;height:444px;background:#ebebeb"></div><div style="left:1440px;top:691px;width:7px;height:205px;background:#a9a9a9;border-radius:4px"></div><div style="left:1447px;top:485px;width:1px;height:658px;background:#fff"></div><div style="left:311px;top:1135px;width:1129px;height:8px;background:#e9e9e9"></div><div style="left:421px;top:1135.5px;width:114px;height:7px;background:#a9a9a9;border-radius:4px"></div><div style="left:311px;top:1143px;width:1136px;height:64px;background:#fff"></div><div style="left:1231px;top:1159px;width:96px;height:32px;background:#fff;border:1px solid #dcdcdc;border-radius:4px"></div><div class="t" style="left:1234.0px;top:1169px;width:90px;text-align:center;font-size:13px;color:#3c3f5e;font-weight:400;letter-spacing:0.2px;">Quay lại</div><div style="left:1335px;top:1159px;width:96px;height:32px;background:#12a453;border-radius:5px"></div><div class="t" style="left:1338.0px;top:1169px;width:90px;text-align:center;font-size:13px;color:#fff;font-weight:400;letter-spacing:0px;">Lưu</div><div style="left:1329px;top:1154px;width:107px;height:42px;border:3px solid #ff3838"></div><div style="left:311px;top:533px;width:7px;height:674px;background:linear-gradient(to right, rgba(0,0,0,0.06), rgba(0,0,0,0))"></div></div><div style="left:311px;top:1143px;width:1px;height:65px;background:#5aa0e6"></div><div style="left:311px;top:1207px;width:1137px;height:1px;background:#5aa0e6"></div><div style="left:1447px;top:1143px;width:1px;height:65px;background:#5aa0e6"></div><div style="left:1448px;top:484px;width:1px;height:725px;background:#000"></div><div style="left:311px;top:1208px;width:1138px;height:1px;background:#000"></div><div style="left:110px;top:484px;width:201px;height:725px;background:#243349"></div><div style="left:110px;top:532px;width:201px;height:3px;background:linear-gradient(rgba(0,0,0,0.03),rgba(0,0,0,0.06),rgba(0,0,0,0.02))"></div><div style="left:110px;top:534px;width:1px;height:675px;background:#000"></div><div style="left:122px;top:490px;width:34px;height:33px;border-radius:6px;background:linear-gradient(135deg,#00bcc0 0%,#00a4d6 50%,#0a8ee6 100%)"></div><svg style="position:absolute;left:122px;top:490px" width="34" height="33"><circle cx="16.3" cy="11" r="5" fill="#fff"/><path d="M8.4 24 C8.4 19.5 11 17.4 14 17.4 H18.6 C21.6 17.4 24.2 19.5 24.2 24 V24.6 Q24.2 26.1 22.7 26.1 H9.9 Q8.4 26.1 8.4 24.6 Z" fill="#fff"/></svg><div class="t" style="left:164px;top:497.2px;font-size:17px;color:#f5f5f5;font-weight:700;letter-spacing:-0.9px;">Học sinh</div><div style="left:283px;top:498px;width:16px;height:3px;background:#f0f0f0;border-radius:1px"></div><div style="left:283px;top:504.4px;width:16px;height:3px;background:#f0f0f0;border-radius:1px"></div><div style="left:283px;top:510.8px;width:16px;height:3px;background:#f0f0f0;border-radius:1px"></div><div class="t" style="left:161px;top:547px;font-size:13px;color:#cdcdcd;font-weight:400;letter-spacing:0.22px;">Tổng quan</div><div class="t" style="left:161px;top:592px;font-size:13px;color:#cdcdcd;font-weight:400;letter-spacing:0.22px;">Tuyển sinh</div><div class="t" style="left:161px;top:637px;font-size:13px;color:#cdcdcd;font-weight:400;letter-spacing:0.22px;">Học tập rèn luyện</div><div class="t" style="left:161px;top:682px;font-size:13px;color:#cdcdcd;font-weight:400;letter-spacing:0.22px;">Giảng dạy</div><div class="t" style="left:161px;top:727px;font-size:13px;color:#cdcdcd;font-weight:400;letter-spacing:0.22px;">Hồ sơ</div><div class="t" style="left:161px;top:772px;font-size:13px;color:#cdcdcd;font-weight:400;letter-spacing:0.22px;">Danh mục</div><div class="t" style="left:161px;top:817px;font-size:13px;color:#cdcdcd;font-weight:400;letter-spacing:0.22px;">Hệ thống</div><div class="t" style="left:161px;top:862px;font-size:13px;color:#cdcdcd;font-weight:400;letter-spacing:0.22px;">Báo cáo</div><div class="t" style="left:161px;top:907px;font-size:13px;color:#cdcdcd;font-weight:400;letter-spacing:0.22px;">Tin nhẳn</div><svg style="position:absolute;left:110px;top:484px;overflow:visible" width="50" height="460" viewBox="0 0 50 460"><rect x="13.8" y="63.3" width="4.2" height="17" fill="none" stroke="#ececec" stroke-width="1.6" rx="0.5"/><rect x="20.7" y="71.8" width="4.2" height="8.5" fill="none" stroke="#ececec" stroke-width="1.6" rx="0.5"/><rect x="27.6" y="59.8" width="4.2" height="20.5" fill="none" stroke="#1fd65f" stroke-width="1.6" rx="0.5"/><rect x="34.6" y="66.4" width="4.2" height="13.9" fill="none" stroke="#ececec" stroke-width="1.6" rx="0.5"/><circle cx="25.9" cy="107" r="5.1" fill="none" stroke="#ececec" stroke-width="1.8"/><path d="M21.4 106.6 Q23.2 104.2 25.6 105.4 Q28 106.7 30.6 105.9" fill="none" stroke="#ececec" stroke-width="1.7"/><path d="M17.8 126.6 V119.6 Q17.8 116.4 21 115.4 L24.4 114.3 L25.9 116.4 L27.4 114.3 L30.8 115.4 Q34 116.4 34 119.6 V126.6" fill="none" stroke="#ececec" stroke-width="1.8" stroke-linejoin="round"/><path d="M21.2 126.6 V120.8 Q21.2 118.6 22.4 117.2 M25.9 116.6 V126.6 M30.6 126.6 V120.8 Q30.6 118.6 29.4 117.2" fill="none" stroke="#ececec" stroke-width="1.7"/><path d="M23.4 119.4 V124.8 M28.4 119.4 V124.8" fill="none" stroke="#e6b400" stroke-width="1.5" stroke-linecap="round"/><path d="M16.8 152.3 H14.6 V170.2 H38.6 V152.3 H36.6" fill="none" stroke="#ececec" stroke-width="1.6"/><path d="M26.2 168 Q24.5 166 21 166 H17.4 V149.8 H23 Q25.6 149.8 26.2 152 Q26.8 149.8 29.4 149.8 H36.2 V166 H31.4 Q27.9 166 26.2 168 V152" fill="none" stroke="#ececec" stroke-width="1.6"/><path d="M19.8 153.1 H23.8 M29.2 153.1 H33.2" stroke="#1fd65f" stroke-width="1.5" stroke-linecap="round"/><path d="M19.8 156.4 H23.8 M29.2 156.4 H33.2" stroke="#1fd65f" stroke-width="1.5" stroke-linecap="round"/><path d="M19.8 159.8 H23.8 M29.2 159.8 H33.2" stroke="#1fd65f" stroke-width="1.5" stroke-linecap="round"/><path d="M19.8 163.1 H23.8 M29.2 163.1 H33.2" stroke="#1fd65f" stroke-width="1.5" stroke-linecap="round"/><rect x="14.1" y="196" width="23.9" height="17.9" fill="none" stroke="#ececec" stroke-width="1.6" rx="0.8"/><rect x="17" y="198.8" width="18.2" height="12.2" fill="none" stroke="#ececec" stroke-width="1.6" rx="0.5"/><path d="M19.8 201.8 H29 M19.8 204.9 H32 M19.8 208 H23.2" stroke="#e6b400" stroke-width="1.6" stroke-linecap="round"/><path d="M16.4 239.1 H29.4 L33.7 243.4 V261 H16.4 Z" fill="none" stroke="#ececec" stroke-width="1.6" stroke-linejoin="round"/><path d="M29.4 239.1 V243.4 H33.7 Z" fill="#ececec" stroke="#ececec" stroke-width="1"/><path d="M20.4 243.6 H25.2 M20.4 247.9 H29.6 M20.4 252.2 H25.2 M20.4 256.5 H29.6" stroke="#1fd65f" stroke-width="1.5" stroke-linecap="round"/><path d="M16.1 304 V283.8 H23.2 L25.6 287.5 H36 V304 Z M16.1 291.2 H36" fill="none" stroke="#ececec" stroke-width="1.6" stroke-linejoin="round"/><path d="M21.3 295.8 H30.4 M21.3 299.5 H30.4" stroke="#1fd65f" stroke-width="1.5" stroke-linecap="round"/><path d="M28.42 348.53 L27.83 351.28 L23.37 351.28 L22.78 348.53 L21.77 348.11 L19.41 349.64 L16.26 346.49 L17.79 344.13 L17.37 343.12 L14.62 342.53 L14.62 338.07 L17.37 337.48 L17.79 336.47 L16.26 334.11 L19.41 330.96 L21.77 332.49 L22.78 332.07 L23.37 329.32 L27.83 329.32 L28.42 332.07 L29.43 332.49 L31.79 330.96 L34.94 334.11 L33.41 336.47 L33.83 337.48 L36.58 338.07 L36.58 342.53 L33.83 343.12 L33.41 344.13 L34.94 346.49 L31.79 349.64 L29.43 348.11 Z" fill="none" stroke="#ececec" stroke-width="1.8" stroke-linejoin="round"/><circle cx="25.6" cy="340.3" r="4.5" fill="none" stroke="#e6b400" stroke-width="1.7"/><path d="M26.2 374.8 A10.4 10.4 0 1 0 36.6 385.2 H26.2 Z" fill="none" stroke="#ececec" stroke-width="1.6" stroke-linejoin="round"/><path d="M28.74 375.01 A10.5 10.5 0 0 1 36.39 382.66" fill="none" stroke="#1fd65f" stroke-width="1.7"/><circle cx="26.4" cy="419.6" r="1.9" fill="none" stroke="#ececec" stroke-width="1.4"/><path d="M18.6 435 V430 Q18.6 422 26.4 422 Q34.2 422 34.2 430 V435" fill="none" stroke="#ececec" stroke-width="1.6"/><path d="M18.6 435.4 H18.1 A2.1 2.1 0 0 0 18.1 439.6 H34.7 A2.1 2.1 0 0 0 34.7 435.4 H34.2" fill="none" stroke="#ececec" stroke-width="1.6"/><path d="M23.2 439.5 L23.8 441.6 H29 L29.6 439.5" fill="none" stroke="#ececec" stroke-width="1.4"/><path d="M21.4 429.5 Q22 425 25.8 424.6" fill="none" stroke="#1fd65f" stroke-width="1.6" stroke-linecap="round"/></svg>
</body></html>
